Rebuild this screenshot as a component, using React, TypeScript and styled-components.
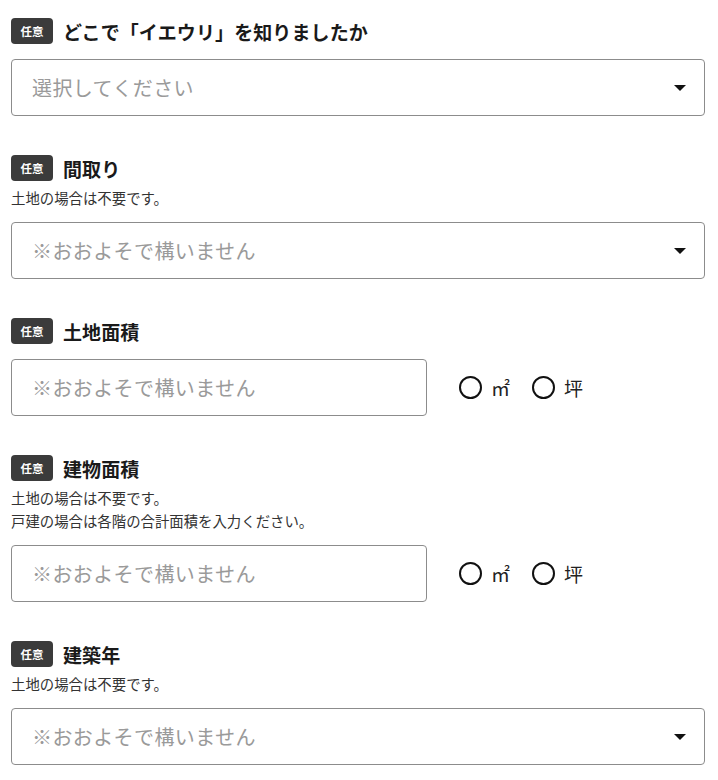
import styled, { createGlobalStyle } from 'styled-components';

const GlobalStyle = createGlobalStyle`
  body {
    margin: 0;
    background: #fff;
    font-family: "Noto Sans CJK JP", "Noto Sans", sans-serif;
    color: #222;
  }
`;

const Form = styled.div`
  padding: 18px 13px 0 11px;
  display: flex;
  flex-direction: column;
  gap: 39px;
`;

const Field = styled.div`
  display: flex;
  flex-direction: column;
`;

const Head = styled.div`
  display: flex;
  align-items: center;
  gap: 10px;
  height: 26px;
`;

const Badge = styled.span`
  width: 42px;
  height: 26px;
  border-radius: 4px;
  background: #3b3b3b;
  color: #fff;
  font-size: 11.5px;
  font-weight: 700;
  display: flex;
  align-items: center;
  justify-content: center;
`;

const Title = styled.span`
  font-size: 19px;
  font-weight: 700;
  color: #1a1a1a;
  letter-spacing: 0.1px;
`;

const Notes = styled.div`
  margin-top: 5px;
  font-size: 14.4px;
  line-height: 23px;
  color: #333;
`;

const Row = styled.div<{ $withNote?: boolean }>`
  margin-top: ${(p) => (p.$withNote ? '13px' : '15px')};
  display: flex;
  align-items: center;
  gap: 32px;
`;

const Box = styled.div<{ $half?: boolean }>`
  box-sizing: border-box;
  width: ${(p) => (p.$half ? '416px' : '100%')};
  height: 57px;
  border: 1px solid #8c8c8c;
  border-radius: 4px;
  padding: 0 18px 0 20px;
  display: flex;
  align-items: center;
  justify-content: space-between;
`;

const Placeholder = styled.span`
  font-size: 20px;
  color: #9a9a9a;
  letter-spacing: 0.4px;
`;

const Caret = styled.span`
  width: 0;
  height: 0;
  border-left: 6px solid transparent;
  border-right: 6px solid transparent;
  border-top: 6px solid #111;
`;

const Radios = styled.div`
  display: flex;
  align-items: center;
  gap: 22px;
`;

const Radio = styled.label`
  display: flex;
  align-items: center;
  gap: 9px;
  font-size: 19px;
  color: #222;
`;

const Circle = styled.span`
  box-sizing: border-box;
  width: 23px;
  height: 23px;
  border: 2.5px solid #111;
  border-radius: 50%;
`;

const Select = ({ text }: { text: string }) => (
  <Box>
    <Placeholder>{text}</Placeholder>
    <Caret />
  </Box>
);

const AreaInput = () => (
  <>
    <Box $half>
      <Placeholder>※おおよそで構いません</Placeholder>
    </Box>
    <Radios>
      <Radio>
        <Circle />㎡
      </Radio>
      <Radio>
        <Circle />坪
      </Radio>
    </Radios>
  </>
);

const App = () => (
  <>
    <GlobalStyle />
    <Form>
      <Field>
        <Head>
          <Badge>任意</Badge>
          <Title>どこで「イエウリ」を知りましたか</Title>
        </Head>
        <Row>
          <Select text="選択してください" />
        </Row>
      </Field>

      <Field>
        <Head>
          <Badge>任意</Badge>
          <Title>間取り</Title>
        </Head>
        <Notes>土地の場合は不要です。</Notes>
        <Row $withNote>
          <Select text="※おおよそで構いません" />
        </Row>
      </Field>

      <Field>
        <Head>
          <Badge>任意</Badge>
          <Title>土地面積</Title>
        </Head>
        <Row>
          <AreaInput />
        </Row>
      </Field>

      <Field>
        <Head>
          <Badge>任意</Badge>
          <Title>建物面積</Title>
        </Head>
        <Notes>
          土地の場合は不要です。
          <br />
          戸建の場合は各階の合計面積を入力ください。
        </Notes>
        <Row $withNote>
          <AreaInput />
        </Row>
      </Field>

      <Field>
        <Head>
          <Badge>任意</Badge>
          <Title>建築年</Title>
        </Head>
        <Notes>土地の場合は不要です。</Notes>
        <Row $withNote>
          <Select text="※おおよそで構いません" />
        </Row>
      </Field>
    </Form>
  </>
);

export default App;
